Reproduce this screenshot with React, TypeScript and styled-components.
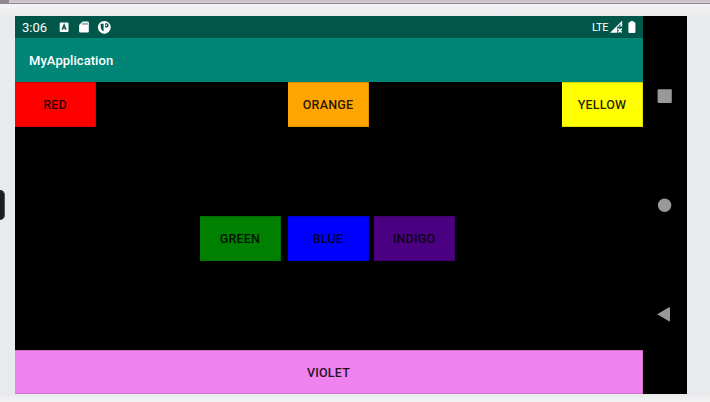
import React from "react";
import styled, { createGlobalStyle } from "styled-components";

const GlobalStyle = createGlobalStyle`
  * { box-sizing: border-box; }
  body { margin: 0; background: #e9eaec; overflow: hidden; font-family: Roboto, sans-serif; }
`;

const Desktop = styled.main`
  position: relative;
  width: 710px;
  height: 402px;
  display: flex;
  flex-direction: column;
  background: linear-gradient(#f4f4f5 4px, #e9eaec 18px, #e9eaec 394px, #f3f3f4 402px);
`;

const WindowEdge = styled.div`
  height: 4px;
  flex: none;
  display: flex;
  background: linear-gradient(#c9bdc6 0 1px, #d3c8d0 1px 3px, #918991 3px 4px);
`;

const EdgeShade = styled.div`
  width: 9px;
  height: 3px;
  background: #8f868e;
`;

const SideKey = styled.div`
  position: absolute;
  left: 0;
  top: 190px;
  width: 5px;
  height: 30px;
  border-radius: 0 5px 5px 0;
  background: #1d1e21;
  border-right: 1px solid #55565a;
`;

const Device = styled.section`
  display: flex;
  width: 672px;
  height: 378px;
  margin: 12px 0 0 15px;
  background: #000;
`;

const Screen = styled.div`
  width: 628px;
  display: flex;
  flex-direction: column;
`;

const StatusBar = styled.header`
  height: 22px;
  flex: none;
  display: flex;
  align-items: center;
  padding: 0 6px 0 7px;
  background: #005749;
  color: #fff;
`;

const Clock = styled.span`
  width: 37px;
  font-size: 13px;
  line-height: 22px;
  padding-top: 2px;
`;

const StatusIcons = styled.div<{ $end?: boolean }>`
  display: flex;
  align-items: center;
  margin-left: ${(p) => (p.$end ? "auto" : "0")};
  svg { display: block; }
`;

const Network = styled.span`
  font-size: 11px;
  line-height: 22px;
  letter-spacing: -0.45px;
  padding-top: 1px;
  margin-right: 2px;
`;

const AppBar = styled.div`
  height: 44px;
  flex: none;
  display: flex;
  align-items: center;
  padding: 1px 14px 0;
  background: #008577;
  color: #fff;
  font-size: 13px;
  font-weight: 500;
  letter-spacing: 0.05px;
`;

const Content = styled.div`
  flex: 1;
  display: flex;
  flex-direction: column;
  justify-content: space-between;
`;

const TopRow = styled.div`
  display: flex;
`;

const MiddleRow = styled.div`
  display: flex;
  margin-left: 185px;
`;

const ColorButton = styled.button<{ $color: string; $gap?: number; $wide?: boolean }>`
  width: ${(p) => (p.$wide ? "100%" : "81px")};
  height: ${(p) => (p.$wide ? "44px" : "45px")};
  margin: 0 0 0 ${(p) => p.$gap ?? 0}px;
  padding: 0 1px 0 0;
  border: 0;
  background: ${(p) => p.$color};
  box-shadow: inset 0 1px rgba(0, 0, 0, 0.16), inset -1px -1px rgba(0, 0, 0, 0.12);
  color: rgba(0, 0, 0, 0.87);
  font-family: Roboto, sans-serif;
  font-size: 12.5px;
  font-weight: 500;
  letter-spacing: 0.2px;
`;

const NavBar = styled.nav`
  flex: 1;
  display: flex;
  flex-direction: column;
  align-items: center;
  justify-content: space-between;
  padding: 73px 1px 72px 0;
  svg { display: block; }
`;

export default function App() {
  return (
    <>
      <GlobalStyle />
      <Desktop>
        <WindowEdge><EdgeShade /></WindowEdge>
        <SideKey />
        <Device>
          <Screen>
            <StatusBar>
              <Clock>3:06</Clock>
              <StatusIcons>
                <svg width="55" height="16" viewBox="0 0 55 16">
                  <rect x="0.7" y="3.5" width="8.8" height="9.5" rx="1" fill="#fff" />
                  <path d="M3.2 10.8 5.1 5.8 7 10.8M3.9 9.2h2.4" fill="none" stroke="#005749" strokeWidth="1.3" />
                  <path d="M23.6 2.6h5q1.2 0 1.2 1.2v8.6q0 1.1-1.1 1.1h-7.4q-1.2 0-1.2-1.1V6z" fill="#fff" />
                  <path d="M24 3.8v2M26 3.8v2M28 3.8v2" stroke="#005749" strokeWidth="0.9" />
                  <circle cx="45.3" cy="8.3" r="6.4" fill="#fff" />
                  <path d="M41.6 4.7h3v7.6c-2.2-1-3-3-3-7.6zM46.2 4.3h1.4a2.1 2.1 0 0 1 0 4.2h-1.4z" fill="#005749" />
                  <circle cx="47.4" cy="6.3" r="0.8" fill="#fff" />
                </svg>
              </StatusIcons>
              <StatusIcons $end>
                <Network>LTE</Network>
                <svg width="27" height="16" viewBox="0 0 27 16">
                  <path d="M0 13.7 12.2 1.8V7.5H7.3v6.2z" fill="#fff" />
                  <path d="M8.9 6.6 10.5 5v2.2H8.9z" fill="#005749" />
                  <path d="m8.3 9.5 3.4 3.9m0-3.9-3.4 3.9" stroke="#fff" strokeWidth="1.5" />
                  <path d="M20.4 2h3v1.3h1q1 0 1 1V13q0 1-1 1h-5q-1 0-1-1V4.3q0-1 1-1h1z" fill="#fff" />
                </svg>
              </StatusIcons>
            </StatusBar>
            <AppBar>MyApplication</AppBar>
            <Content>
              <TopRow>
                <ColorButton $color="#ff0000">RED</ColorButton>
                <ColorButton $color="#ffa500" $gap={192}>ORANGE</ColorButton>
                <ColorButton $color="#ffff00" $gap={193}>YELLOW</ColorButton>
              </TopRow>
              <MiddleRow>
                <ColorButton $color="#008000">GREEN</ColorButton>
                <ColorButton $color="#0000ff" $gap={7}>BLUE</ColorButton>
                <ColorButton $color="#4b0082" $gap={5}>INDIGO</ColorButton>
              </MiddleRow>
              <ColorButton $color="#ee82ee" $wide>VIOLET</ColorButton>
            </Content>
          </Screen>
          <NavBar>
            <svg width="15" height="15" viewBox="0 0 15 15"><rect x="0.6" y="0.2" width="14.2" height="13.8" rx="1" fill="#999" /></svg>
            <svg width="15" height="15" viewBox="0 0 15 15"><circle cx="7.6" cy="7.3" r="6.7" fill="#999" /></svg>
            <svg width="15" height="15" viewBox="0 0 15 15"><path d="M0.2 7.3 12 0.3q1-.4 1 .5v13q0 .9-1 .4z" fill="#999" /></svg>
          </NavBar>
        </Device>
      </Desktop>
    </>
  );
}
